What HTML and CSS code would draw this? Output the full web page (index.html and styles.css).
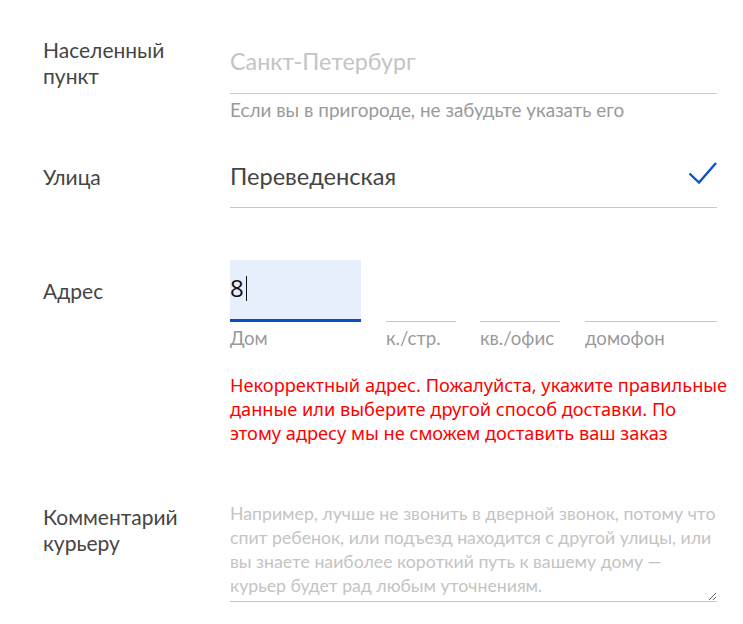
FILE: index.html
```
<!DOCTYPE html>
<html lang="ru"><head><meta charset="utf-8"><title>Адрес доставки</title><link rel="stylesheet" href="styles.css"></head>
<body>
<form class="form">
  <div class="row row-city">
    <label class="label" for="city">Населенный<br>пункт</label>
    <div class="field">
      <input class="input input-city" id="city" type="text" placeholder="Санкт-Петербург">
      <div class="hint">Если вы в пригороде, не забудьте указать его</div>
    </div>
  </div>
  <div class="row row-street">
    <label class="label label-street" for="street">Улица</label>
    <div class="field field-street">
      <input class="input input-street" id="street" type="text" value="Переведенская">
      <svg class="check" width="30" height="24" viewBox="0 0 30 24"><path d="M2.5 13.5 L12 22.5 L29 3" fill="none" stroke="#0d52c4" stroke-width="2.4"/></svg>
    </div>
  </div>
  <div class="row row-address">
    <div class="label label-address">Адрес</div>
    <div class="field">
      <div class="parts">
        <div class="part part-house"><div class="box box-active"><span class="val">8</span><span class="caret"></span></div><div class="sub">Дом</div></div>
        <div class="part part-block"><div class="box"></div><div class="sub">к./стр.</div></div>
        <div class="part part-flat"><div class="box"></div><div class="sub">кв./офис</div></div>
        <div class="part part-intercom"><div class="box"></div><div class="sub">домофон</div></div>
      </div>
      <div class="error">Некорректный адрес. Пожалуйста, укажите правильные данные или выберите другой способ доставки. По этому адресу мы не сможем доставить ваш заказ</div>
    </div>
  </div>
  <div class="row row-comment">
    <label class="label" for="comment">Комментарий<br>курьеру</label>
    <div class="field">
      <textarea class="comment" id="comment" rows="4" placeholder="Например, лучше не звонить в дверной звонок, потому что спит ребенок, или подъезд находится с другой улицы, или вы знаете наиболее короткий путь к вашему дому — курьер будет рад любым уточнениям."></textarea>
    </div>
  </div>
</form>
</body></html>
```
FILE: styles.css
```
*{box-sizing:border-box}
body{margin:0;background:#fff;font-family:Lato,"Noto Sans",sans-serif;color:#444}
.form{padding:37px 0 0 43px}
.row{display:grid;grid-template-columns:187px 487px}
.label{font-size:21px;line-height:26px;color:#454545}
.field{position:relative}
.input{display:block;width:100%;border:0;border-bottom:1px solid #c8c8c8;padding:0;margin:0;font-family:Lato,sans-serif;font-size:23.3px;color:#444;background:transparent;outline:none}
.input::placeholder{color:#c4c4c4}
.input-city{height:57px;padding-bottom:8px}
.hint{margin-top:4px;font-size:18.9px;line-height:24px;color:#9a9a9a}
.row-street{margin-top:28px}
.label-street{padding-top:14px}
.input-street{height:58px;padding-bottom:6px;font-size:23.6px}
.check{position:absolute;right:0;top:10px}
.row-address{margin-top:52px}
.label-address{padding-top:18px}
.parts{display:flex}
.part-house{width:131px}
.part-block{width:70px;margin-left:25px}
.part-flat{width:80px;margin-left:24px}
.part-intercom{width:132px;margin-left:25px}
.box{height:62px;border-bottom:1px solid #c8c8c8;display:flex;align-items:center}
.box-active{background:#e8effc;border-bottom:3px solid #0a4fc0;padding-bottom:3px}
.val{font-family:"Open Sans",sans-serif;font-size:24px;color:#111;line-height:1}
.caret{width:1px;height:25px;background:#111;margin-left:2px}
.sub{margin-top:4px;font-size:18.6px;line-height:24px;color:#9a9a9a;white-space:nowrap}
.error{margin-top:23px;margin-right:-14px;font-family:"Noto Sans",sans-serif;font-size:18.2px;line-height:24px;color:#f00}
.row-comment{margin-top:59px}
.comment{display:block;width:100%;height:100px;margin:-2px 0 0;border:0;border-bottom:1px solid #c8c8c8;padding:0 0 4px;font-family:Lato,sans-serif;font-size:17.7px;line-height:24px;color:#444;outline:none;resize:vertical;overflow:hidden}
.comment::placeholder{color:#c4c4c4}
```
